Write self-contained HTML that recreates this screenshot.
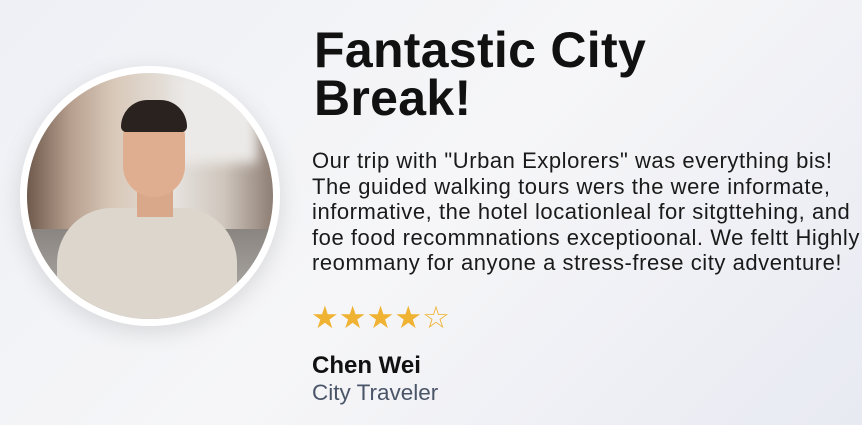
<!DOCTYPE html>
<html><head><style>
html,body{margin:0;width:862px;height:425px;overflow:hidden}
body{background:linear-gradient(135deg,#eef0f5 0%,#f6f6f8 50%,#e8eaf2 100%);font-family:"Liberation Sans",sans-serif;position:relative}
.circ{position:absolute;left:20px;top:66px;width:246px;height:246px;border:7px solid #fff;border-radius:50%;overflow:hidden;box-shadow:0 6px 24px rgba(0,0,0,.12);
background:linear-gradient(90deg,#6e5a4c 0%,#b8a090 18%,#d8c8b8 35%,#e6e2de 60%,#cfc6bd 80%,#8e7e74 100%)}
.ground{position:absolute;left:0;right:0;bottom:0;height:90px;background:linear-gradient(#8a8580,#b5b2ae)}
.sky{position:absolute;left:150px;top:0;width:80px;height:90px;background:#eceae8;filter:blur(6px)}
.body{position:absolute;left:30px;top:135px;width:180px;height:130px;background:#dcd6cc;border-radius:55px 55px 0 0}
.neck{position:absolute;left:110px;top:110px;width:36px;height:34px;background:#d9a78a}
.head{position:absolute;left:96px;top:36px;width:62px;height:88px;background:#dfae90;border-radius:28px 28px 32px 32px}
.hair{position:absolute;left:94px;top:27px;width:66px;height:32px;background:#2a221e;border-radius:30px 30px 6px 6px}
h1{position:absolute;left:314px;top:26px;margin:0;font-size:50px;line-height:48px;font-weight:bold;color:#111;letter-spacing:.3px}
.txt{position:absolute;left:312px;top:148px;width:560px;font-size:22px;line-height:25.5px;color:#1a1a1a;letter-spacing:.55px;white-space:nowrap}
.stars{position:absolute;left:311px;top:300px;font-size:31px;color:#f0b232}
.name{position:absolute;left:312px;top:352px;font-size:24px;font-weight:bold;color:#111}
.role{position:absolute;left:312px;top:380px;font-size:22.5px;color:#4a5568}
</style></head><body>
<div class="circ"><div class="sky"></div><div class="ground"></div><div class="body"></div><div class="neck"></div><div class="head"></div><div class="hair"></div></div>
<h1>Fantastic City<br>Break!</h1>
<div class="txt">Our trip with "Urban Explorers" was everything bis!<br>The guided walking tours wers the were informate,<br>informative, the hotel locationleal for sitgttehing, and<br>foe food recommnations exceptioonal. We feltt Highly<br>reommany for anyone a stress-frese city adventure!</div>
<div class="stars">★★★★☆</div>
<div class="name">Chen Wei</div>
<div class="role">City Traveler</div>
</body></html>
